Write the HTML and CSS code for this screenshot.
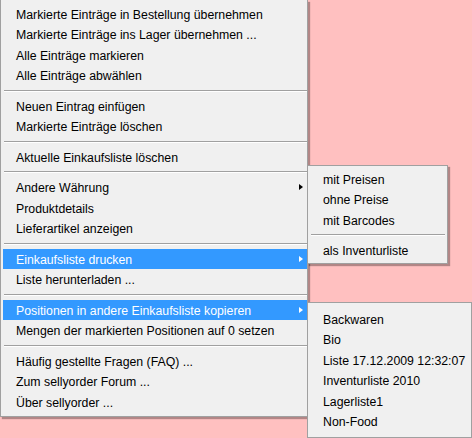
FILE: index.html
```html
<!DOCTYPE html>
<html lang="de">
<head>
<meta charset="utf-8">
<title>Kontextmenü</title>
<link rel="stylesheet" href="styles.css">
</head>
<body>
<div class="menu main">
  <div class="item">Markierte Einträge in Bestellung übernehmen</div>
  <div class="item">Markierte Einträge ins Lager übernehmen ...</div>
  <div class="item">Alle Einträge markieren</div>
  <div class="item">Alle Einträge abwählen</div>
  <div class="sep"></div>
  <div class="item">Neuen Eintrag einfügen</div>
  <div class="item">Markierte Einträge löschen</div>
  <div class="sep"></div>
  <div class="item">Aktuelle Einkaufsliste löschen</div>
  <div class="sep"></div>
  <div class="item">Andere Währung<span class="arrow"></span></div>
  <div class="item">Produktdetails</div>
  <div class="item">Lieferartikel anzeigen</div>
  <div class="sep"></div>
  <div class="item active">Einkaufsliste drucken<span class="arrow"></span>
    <div class="menu sub sub-print">
      <div class="item">mit Preisen</div>
      <div class="item">ohne Preise</div>
      <div class="item">mit Barcodes</div>
      <div class="sep"></div>
      <div class="item">als Inventurliste</div>
    </div>
  </div>
  <div class="item">Liste herunterladen ...</div>
  <div class="sep"></div>
  <div class="item active">Positionen in andere Einkaufsliste kopieren<span class="arrow"></span>
    <div class="menu sub sub-copy">
      <div class="item">Backwaren</div>
      <div class="item">Bio</div>
      <div class="item">Liste 17.12.2009 12:32:07</div>
      <div class="item">Inventurliste 2010</div>
      <div class="item">Lagerliste1</div>
      <div class="item">Non-Food</div>
    </div>
  </div>
  <div class="item">Mengen der markierten Positionen auf 0 setzen</div>
  <div class="sep"></div>
  <div class="item">Häufig gestellte Fragen (FAQ) ...</div>
  <div class="item">Zum sellyorder Forum ...</div>
  <div class="item">Über sellyorder ...</div>
</div>
</body>
</html>
```

FILE: styles.css
```css
html, body {
  margin: 0;
  padding: 0;
}
body {
  background: #ffc0c0;
  width: 472px;
  height: 438px;
  overflow: hidden;
  font-family: "Liberation Sans", Arial, sans-serif;
  font-size: 12.3px;
  color: #000;
}
.menu {
  background: #f0f0f0;
  border: 1px solid #a0a0a0;
  box-sizing: border-box;
  box-shadow: 2px 2px 1px rgba(0, 0, 0, 0.3);
  padding-left: 2px;
  padding-right: 0;
}
.main {
  position: relative;
  width: 308px;
  border-top: none;
  padding-top: 3.75px;
  padding-bottom: 4px;
}
.item {
  position: relative;
  display: flex;
  align-items: center;
  box-sizing: border-box;
  height: 20.5px;
  line-height: 18px;
  padding-top: 1.5px;
  padding-left: 13px;
  white-space: nowrap;
}
.item.active {
  background: #3399ff;
  color: #fff;
}
.arrow {
  margin-left: auto;
  margin-right: 4px;
  margin-top: -2px;
  width: 0;
  height: 0;
  border-left: 4px solid #000;
  border-top: 3.5px solid transparent;
  border-bottom: 3.5px solid transparent;
}
.item.active > .arrow {
  border-left-color: #fff;
}
.sep {
  height: 10px;
  box-sizing: border-box;
  padding-top: 4px;
  margin-left: 1px;
}
.sep::before {
  content: "";
  display: block;
  height: 1px;
  background: #a0a0a0;
  border-bottom: 1px solid #ffffff;
}
.sub {
  position: absolute;
  top: 0;
  left: 100%;
  color: #000;
}
.sub .sep {
  margin-right: 2px;
}
.sub-print {
  top: -83.75px;
  width: 141px;
  padding-top: 2.75px;
  padding-bottom: 2px;
}
.sub-copy {
  top: 2.25px;
  width: 165px;
  padding-top: 5.75px;
  padding-bottom: 5px;
}
```
